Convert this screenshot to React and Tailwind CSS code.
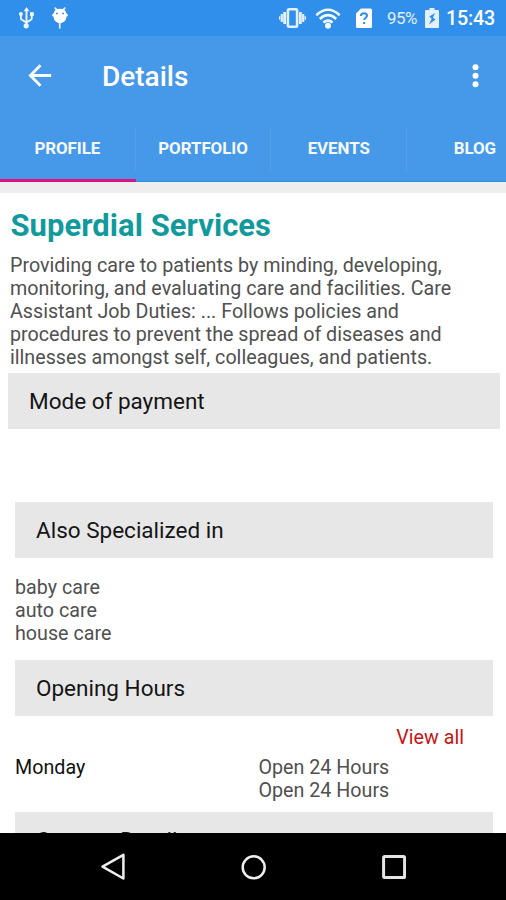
import React from "react";

function StatusBar() {
  return (
    <div className="flex h-9 shrink-0 items-center bg-[#308fea] text-white">
      <svg className="ml-[18px]" width="17" height="22" viewBox="0 0 17 22" fill="none" stroke="#eef6ff" strokeWidth="1.900">
        <path d="M8.5 3v15M2.900 8v3.200q0 1.500 1.500 2l4.100 2.300M13.800 8v3.200q0 1.500-1.500 2L8.500 15.500" />
        <path d="M8.500 0l2.800 4.300H5.700z" fill="#eef6ff" stroke="none" />
        <circle cx="2.900" cy="7" r="2" fill="#eef6ff" stroke="none" />
        <path d="M12 5.200h3.800v3.800H12z" fill="#eef6ff" stroke="none" />
        <circle cx="8.200" cy="18.800" r="2.600" fill="#eef6ff" stroke="none" />
      </svg>
      <svg className="ml-[17px]" width="16" height="22" viewBox="0 0 16 22">
        <path d="M3.200 1l1.600 2M12.800 1l-1.600 2M7.700 15v6" stroke="#fff" strokeWidth="1.600" strokeLinecap="round" />
        <path d="M8 1.800c3.800 0 6 2 6.400 4.700.9.100 1.400.700 1.400 1.600s-.500 1.400-1.400 1.600C14.400 13.500 11.600 16 8 16s-6.400-2.500-6.400-6.300C.700 9.500.200 9 .200 8.100s.500-1.500 1.400-1.600C2 3.800 4.200 1.800 8 1.800z" fill="#fff" />
        <circle cx="4.900" cy="6.500" r=".9" fill="#308fea" />
        <circle cx="11.100" cy="6.500" r=".9" fill="#308fea" />
      </svg>
      <svg className="ml-[211px]" width="27" height="20" viewBox="0 0 27 20" fill="none" stroke="#e3f0fd">
        <rect x="8.900" y="1.300" width="9.200" height="17.400" rx="1.200" strokeWidth="2.600" />
        <path d="M5.600 4v12M21.400 4v12" strokeWidth="2.800" />
        <path d="M2.800 6v8M24.200 6v8" strokeWidth="2.200" />
        <path d="M.700 8.300v3.400M26.300 8.300v3.400" strokeWidth="1.400" />
      </svg>
      <svg className="ml-[9px]" width="26" height="21" viewBox="0 0 26 21" fill="none" stroke="#f2f8ff" strokeWidth="2.600">
        <path d="M1.300 7.200Q13-3.700 24.700 7.200" />
        <path d="M4.800 11Q13 3.400 21.200 11" />
        <path d="M8.400 14.600Q13 10.600 17.600 14.600" />
        <circle cx="13" cy="17.700" r="3" fill="#f2f8ff" stroke="none" />
      </svg>
      <svg className="ml-[15px]" width="16" height="20" viewBox="0 0 16 20">
        <path d="M5 .500h9.500Q16 .500 16 2v16.500q0 1.500-1.500 1.500h-13Q0 20 0 18.500V5.500z" fill="#fff" />
        <path d="M4.900 8q.100-2.800 3.100-2.800t3 2.600c0 2-2.800 2-2.800 4.200M8.100 14v2" fill="none" stroke="#308fea" strokeWidth="2" />
      </svg>
      <span className="ml-[15px] w-[31px] text-[16.900px] leading-9 tracking-[-0.500px] whitespace-nowrap text-[#e3f0fd]">95%</span>
      <svg className="ml-[7px]" width="14" height="20" viewBox="0 0 14 20">
        <path d="M4.500 0h5v2H13q1 0 1 1v16q0 1-1 1H1q-1 0-1-1V3q0-1 1-1h3.500z" fill="#e3f0fd" />
        <path d="M10.200 5L4.200 8.500l2.500 2.200L4 16.500l6.500-5-2.700-2z" fill="#308fea" />
      </svg>
      <span className="ml-[7px] pt-[2px] text-[19.700px] leading-9 font-medium tracking-[-0.200px] whitespace-nowrap">15:43</span>
    </div>
  );
}

function Toolbar() {
  return (
    <div className="flex h-[79px] shrink-0 items-center bg-[#4698e8] text-white">
      <svg className="ml-[28px]" width="24" height="24" viewBox="0 0 24 24" fill="none" stroke="#fff" strokeWidth="2.800">
        <path d="M23.200 11.500H3M12.500 1.200L2.400 11.500l10.100 10.300" />
      </svg>
      <h1 className="ml-[50px] pt-[3px] text-[28px] leading-8 font-medium">Details</h1>
      <svg className="mr-[27px] ml-auto" width="7" height="24" viewBox="0 0 7 24" fill="#fff">
        <circle cx="3.500" cy="3.200" r="3" />
        <circle cx="3.500" cy="11.700" r="3" />
        <circle cx="3.500" cy="20.200" r="3" />
      </svg>
    </div>
  );
}

function Tab({ children, active = false, last = false }) {
  return (
    <div className="flex w-[135.700px] shrink-0 flex-col">
      <div className={last ? "mt-[12px] h-[44px] text-center leading-[43px]" : "mt-[12px] h-[44px] border-r border-[#539fea] text-center leading-[43px]"}>
        {children}
      </div>
      <div className={active ? "mt-auto h-[3px] bg-[#dd1480]" : "mt-auto h-[1px] bg-[#348fe2]"} />
    </div>
  );
}

function Tabs() {
  return (
    <div className="flex h-[67px] shrink-0 overflow-hidden bg-[#4698e8] text-[16.900px] font-bold tracking-[-0.050px] text-[#f4f9fe]">
      <Tab active>PROFILE</Tab>
      <Tab>PORTFOLIO</Tab>
      <Tab>EVENTS</Tab>
      <Tab last>BLOG</Tab>
    </div>
  );
}

function SectionHeader({ children }) {
  return <h3 className="h-14 bg-[#e7e7e7] pl-[21px] text-[22.500px] leading-[57px] text-[#151515]">{children}</h3>;
}

function NavBar() {
  return (
    <div className="flex h-[67px] shrink-0 items-center bg-black">
      <svg className="ml-[100px]" width="27" height="28" viewBox="0 0 27 28" fill="none" stroke="#eee" strokeWidth="2.500">
        <path d="M23.400 1.800v23.700L2.500 13.700z" strokeLinejoin="round" />
      </svg>
      <svg className="ml-[114px]" width="26" height="26" viewBox="0 0 26 26" fill="none" stroke="#eee" strokeWidth="2.500">
        <circle cx="12.700" cy="13.300" r="11" />
      </svg>
      <svg className="ml-[115px]" width="24" height="24" viewBox="0 0 24 24" fill="none" stroke="#e5e5e5" strokeWidth="3">
        <rect x="1.600" y="1.600" width="21" height="21" rx="1" />
      </svg>
    </div>
  );
}

export default function App() {
  return (
    <div className="flex h-[900px] w-[506px] flex-col overflow-hidden bg-white font-['Roboto',sans-serif]">
      <StatusBar />
      <Toolbar />
      <Tabs />
      <div className="h-[11px] shrink-0 bg-[#eeeeee]" />
      <main className="flex min-h-0 flex-1 flex-col overflow-hidden text-[19.700px] leading-[23.200px] text-[#505050]">
        <h2 className="mt-[15px] ml-[10.500px] h-[36px] shrink-0 text-[30.900px] leading-[36px] font-bold tracking-[0.080px] text-[#119a9c]">Superdial Services</h2>
        <p className="mt-[9.500px] ml-[10px] h-[115.500px] w-[470px] shrink-0">
          Providing care to patients by minding, developing,<br />
          monitoring, and evaluating care and facilities. Care<br />
          Assistant Job Duties: ... Follows policies and<br />
          procedures to prevent the spread of diseases and<br />
          illnesses amongst self, colleagues, and patients.
        </p>
        <section className="mt-[4px] mr-[6px] ml-[8px] h-[129px] shrink-0">
          <SectionHeader>Mode of payment</SectionHeader>
        </section>
        <section className="mr-[13px] ml-[15px] h-[158px] shrink-0">
          <SectionHeader>Also Specialized in</SectionHeader>
          <ul className="mt-[17.500px]">
            <li>baby care</li>
            <li>auto care</li>
            <li>house care</li>
          </ul>
        </section>
        <section className="mr-[13px] ml-[15px] h-[152px] shrink-0">
          <SectionHeader>Opening Hours</SectionHeader>
          <div className="mt-[10px] mr-[29px] text-right text-[#c81414]">View all</div>
          <div className="mt-[6.500px] flex">
            <div className="w-[243.500px] text-[#111]">Monday</div>
            <div>
              <div>Open 24 Hours</div>
              <div>Open 24 Hours</div>
            </div>
          </div>
        </section>
        <section className="mr-[13px] ml-[15px] shrink-0">
          <SectionHeader>Contact Details</SectionHeader>
        </section>
      </main>
      <NavBar />
    </div>
  );
}
